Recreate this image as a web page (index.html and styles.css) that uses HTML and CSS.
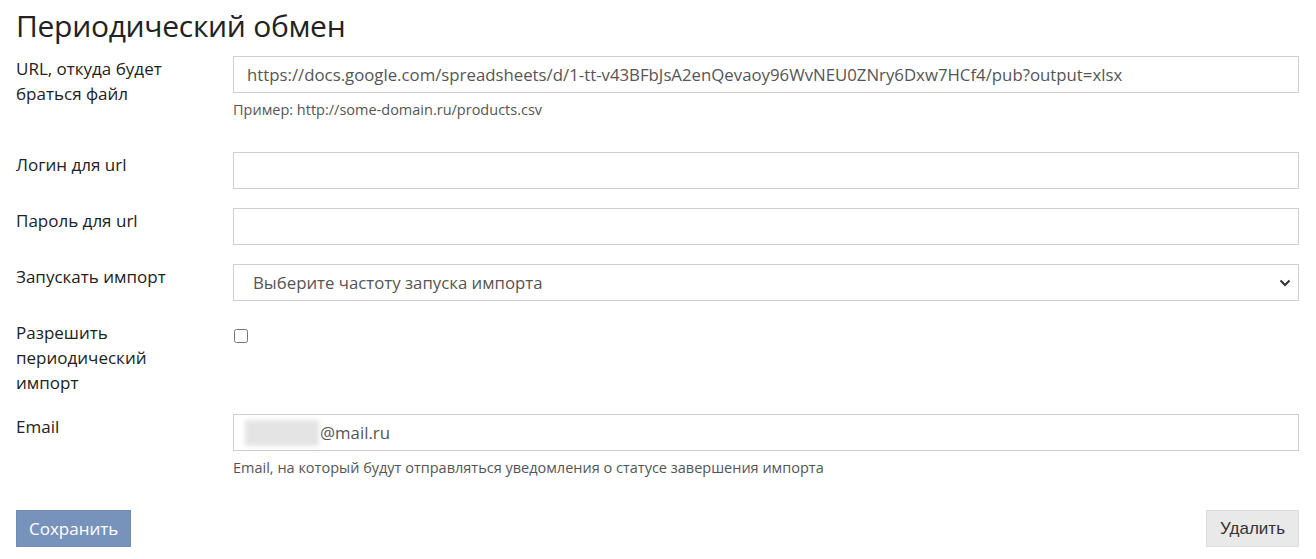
FILE: index.html
```html
<!DOCTYPE html>
<html lang="ru">
<head>
<meta charset="utf-8">
<title>Периодический обмен</title>
<link rel="stylesheet" href="styles.css">
</head>
<body>
<form class="exchange">
  <h1 class="exchange__title">Периодический обмен</h1>

  <div class="row">
    <label class="row__label" for="url">URL, откуда будет браться файл</label>
    <div class="row__field">
      <input class="input" id="url" type="text" value="https://docs.google.com/spreadsheets/d/1-tt-v43BFbJsA2enQevaoy96WvNEU0ZNry6Dxw7HCf4/pub?output=xlsx">
      <p class="hint">Пример: http://some-domain.ru/products.csv</p>
    </div>
  </div>

  <div class="row">
    <label class="row__label" for="login">Логин для url</label>
    <div class="row__field">
      <input class="input" id="login" type="text">
    </div>
  </div>

  <div class="row">
    <label class="row__label" for="password">Пароль для url</label>
    <div class="row__field">
      <input class="input" id="password" type="password">
    </div>
  </div>

  <div class="row">
    <label class="row__label" for="period">Запускать импорт</label>
    <div class="row__field">
      <select class="input select" id="period">
        <option>Выберите частоту запуска импорта</option>
      </select>
    </div>
  </div>

  <div class="row">
    <label class="row__label row__label--narrow" for="allow">Разрешить периодический импорт</label>
    <div class="row__field">
      <input class="checkbox" id="allow" type="checkbox">
    </div>
  </div>

  <div class="row">
    <label class="row__label" for="email">Email</label>
    <div class="row__field">
      <div class="email">
        <input class="input input--email" id="email" type="text" value="@mail.ru">
        <span class="email__hidden"></span>
      </div>
      <p class="hint">Email, на который будут отправляться уведомления о статусе завершения импорта</p>
    </div>
  </div>

  <div class="actions">
    <button class="btn btn--primary" type="submit">Сохранить</button>
    <button class="btn btn--secondary" type="button">Удалить</button>
  </div>
</form>
</body>
</html>
```

FILE: styles.css
```css
* {
  box-sizing: border-box;
}

body {
  margin: 0;
  background: #fff;
  color: #222;
  font-family: "Open Sans", "Noto Sans", sans-serif;
}

.exchange {
  padding: 0 17px 0 16px;
}

.exchange__title {
  margin: 0;
  padding: 6px 0 10px;
  font-size: 30px;
  font-weight: 400;
  line-height: 40px;
  color: #222;
  letter-spacing: -0.3px;
}

.row {
  display: grid;
  grid-template-columns: 217px 1fr;
  margin-bottom: 19px;
}

.row__label {
  font-size: 17px;
  font-weight: 500;
  line-height: 25px;
  color: #222;
  padding-right: 36px;
}

.row__label--narrow {
  padding-right: 50px;
}

.row__field {
  min-width: 0;
}

.input {
  display: block;
  width: 100%;
  height: 37px;
  margin: 0;
  padding: 0 13px;
  border: 1px solid #cfcfcf;
  border-radius: 0;
  background: #fff;
  font-family: inherit;
  font-size: 16.8px;
  color: #555;
  outline: none;
}

.select {
  appearance: none;
  -webkit-appearance: none;
  padding-left: 19px;
  background-image: url("data:image/svg+xml,%3Csvg xmlns='http://www.w3.org/2000/svg' width='12' height='8' viewBox='0 0 12 8'%3E%3Cpath d='M1.5 1.5 6 6l4.5-4.5' fill='none' stroke='%23333' stroke-width='2'/%3E%3C/svg%3E");
  background-repeat: no-repeat;
  background-position: right 7px center;
}

.checkbox {
  display: block;
  width: 14px;
  height: 14px;
  margin: 9px 0 0 1px;
}

.email {
  position: relative;
}

.input--email {
  padding-left: 86px;
}

.email__hidden {
  position: absolute;
  left: 12px;
  top: 6px;
  width: 74px;
  height: 26px;
  background: #e4e4e4;
  filter: blur(2px);
}

.hint {
  margin: 8px 0 14px;
  font-size: 14.5px;
  line-height: 18px;
  color: #555;
}

.actions {
  display: flex;
  justify-content: space-between;
}

.btn {
  height: 37px;
  margin: 0;
  font-size: 17px;
  border-radius: 0;
  cursor: pointer;
}

.btn--primary {
  padding: 0 12px;
  background: #7793bb;
  border: 1px solid #6f8bb3;
  color: #fff;
  font-family: "Open Sans", "Noto Sans", sans-serif;
}

.btn--secondary {
  padding: 0 13px;
  background: #e9e9e9;
  border: 1px solid #dcdcdc;
  color: #333;
  font-family: "Liberation Sans", Arial, sans-serif;
}
```
